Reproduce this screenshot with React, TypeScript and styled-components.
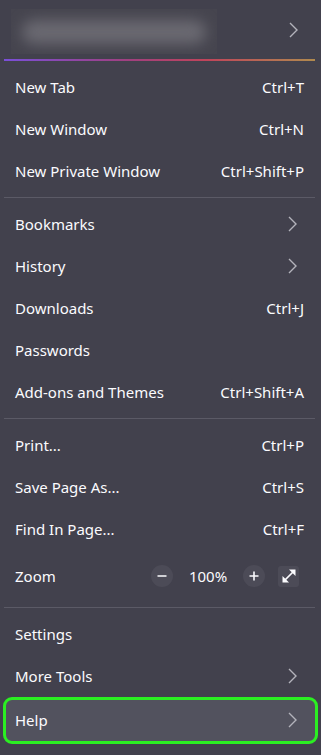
import React from "react"
import styled, { createGlobalStyle } from "styled-components"

const GlobalStyle = createGlobalStyle`
  html, body {
    margin: 0;
    padding: 0;
    background: #42414d;
  }
  body {
    font-family: "Noto Sans", "Open Sans", sans-serif;
    color: #fbfbfe;
  }
`

const Panel = styled.div`
  width: 321px;
  height: 755px;
  background: #42414d;
  display: flex;
  flex-direction: column;
  overflow: hidden;
`

const AccountRow = styled.div`
  height: 59px;
  display: flex;
  align-items: center;
  justify-content: space-between;
  padding: 0 22px 0 11px;
  box-sizing: border-box;
`

const BlurredAccount = styled.div`
  width: 206px;
  height: 45px;
  margin-top: 4px;
  background: #46454f;
  display: flex;
  align-items: center;
  justify-content: center;
  overflow: hidden;
`

const BlurBlob = styled.div`
  width: 184px;
  height: 24px;
  border-radius: 12px;
  background: #6a6971;
  filter: blur(7px);
`

const GradientLine = styled.div`
  height: 2px;
  margin: 0 6px 5px 4px;
  background: linear-gradient(90deg, #7a4fd8 0%, #a0407f 40%, #c0445a 65%, #b08a4e 100%);
`

const Separator = styled.div`
  height: 1px;
  margin: 5px 6px 5px 4px;
  background: #5b5a66;
`

const Row = styled.div<{ $tall?: boolean; $highlight?: boolean }>`
  height: ${({ $tall }) => ($tall ? 52 : 42)}px;
  display: flex;
  align-items: center;
  justify-content: space-between;
  box-sizing: border-box;
  padding: 0 17px 0 15px;
  font-size: 15px;
  ${({ $highlight }) =>
    $highlight &&
    `
    margin: 0 3px;
    padding: 0 11px 1px 9px;
    height: 47px;
    background: #52525e;
    border: 3px solid #2bef22;
    border-radius: 9px;
  `}
`

const Label = styled.span`
  color: #fbfbfe;
`

const Shortcut = styled.span`
  color: #fbfbfe;
`

const ChevronBox = styled.span`
  display: flex;
  align-items: center;
  margin-right: 6px;
`

const ZoomControls = styled.div`
  display: flex;
  align-items: center;
`

const RoundButton = styled.span`
  width: 22px;
  height: 22px;
  border-radius: 50%;
  background: #4c4b57;
  display: flex;
  align-items: center;
  justify-content: center;
`

const ZoomValue = styled.span`
  width: 70px;
  text-align: center;
  font-size: 15px;
`

const FullscreenButton = styled.span`
  width: 21px;
  height: 21px;
  margin-left: 13px;
  margin-right: 5px;
  border-radius: 3px;
  background: #4c4b57;
  display: flex;
  align-items: center;
  justify-content: center;
`

const ChevronIcon = () => (
  <svg width="10" height="16" viewBox="0 0 10 16">
    <path d="M1 1 L8 8 L1 15" fill="none" stroke="#b3b3bb" strokeWidth="1.4" />
  </svg>
)

const Chevron = () => (
  <ChevronBox>
    <ChevronIcon />
  </ChevronBox>
)

type Item = { label: string; shortcut?: string; chevron?: boolean }

const group1: Item[] = [
  { label: "New Tab", shortcut: "Ctrl+T" },
  { label: "New Window", shortcut: "Ctrl+N" },
  { label: "New Private Window", shortcut: "Ctrl+Shift+P" },
]
const group2: Item[] = [
  { label: "Bookmarks", chevron: true },
  { label: "History", chevron: true },
  { label: "Downloads", shortcut: "Ctrl+J" },
  { label: "Passwords" },
  { label: "Add-ons and Themes", shortcut: "Ctrl+Shift+A" },
]
const group3: Item[] = [
  { label: "Print...", shortcut: "Ctrl+P" },
  { label: "Save Page As...", shortcut: "Ctrl+S" },
  { label: "Find In Page...", shortcut: "Ctrl+F" },
]

const MenuItem = ({ item }: { item: Item }) => (
  <Row>
    <Label>{item.label}</Label>
    {item.shortcut && <Shortcut>{item.shortcut}</Shortcut>}
    {item.chevron && <Chevron />}
  </Row>
)

const App: React.FC = () => (
  <>
    <GlobalStyle />
    <Panel>
      <AccountRow>
        <BlurredAccount>
          <BlurBlob />
        </BlurredAccount>
        <ChevronIcon />
      </AccountRow>
      <GradientLine />
      {group1.map((i) => <MenuItem key={i.label} item={i} />)}
      <Separator />
      {group2.map((i) => <MenuItem key={i.label} item={i} />)}
      <Separator />
      {group3.map((i) => <MenuItem key={i.label} item={i} />)}
      <Row $tall>
        <Label>Zoom</Label>
        <ZoomControls>
          <RoundButton>
            <svg width="12" height="12" viewBox="0 0 12 12">
              <path d="M1.5 6 H10.5" stroke="#fbfbfe" strokeWidth="1.5" />
            </svg>
          </RoundButton>
          <ZoomValue>100%</ZoomValue>
          <RoundButton>
            <svg width="12" height="12" viewBox="0 0 12 12">
              <path d="M1.5 6 H10.5 M6 1.5 V10.5" stroke="#fbfbfe" strokeWidth="1.6" />
            </svg>
          </RoundButton>
          <FullscreenButton>
            <svg width="16" height="16" viewBox="0 0 16 16">
              <path d="M3 13 L13 3" stroke="#fbfbfe" strokeWidth="1.7" />
              <path d="M8 1.5 H14.5 V8 Z" fill="#fbfbfe" />
              <path d="M1.5 8 V14.5 H8 Z" fill="#fbfbfe" />
            </svg>
          </FullscreenButton>
        </ZoomControls>
      </Row>
      <Separator />
      <MenuItem item={{ label: "Settings" }} />
      <MenuItem item={{ label: "More Tools", chevron: true }} />
      <Row $highlight>
        <Label>Help</Label>
        <Chevron />
      </Row>
    </Panel>
  </>
)

export default App
